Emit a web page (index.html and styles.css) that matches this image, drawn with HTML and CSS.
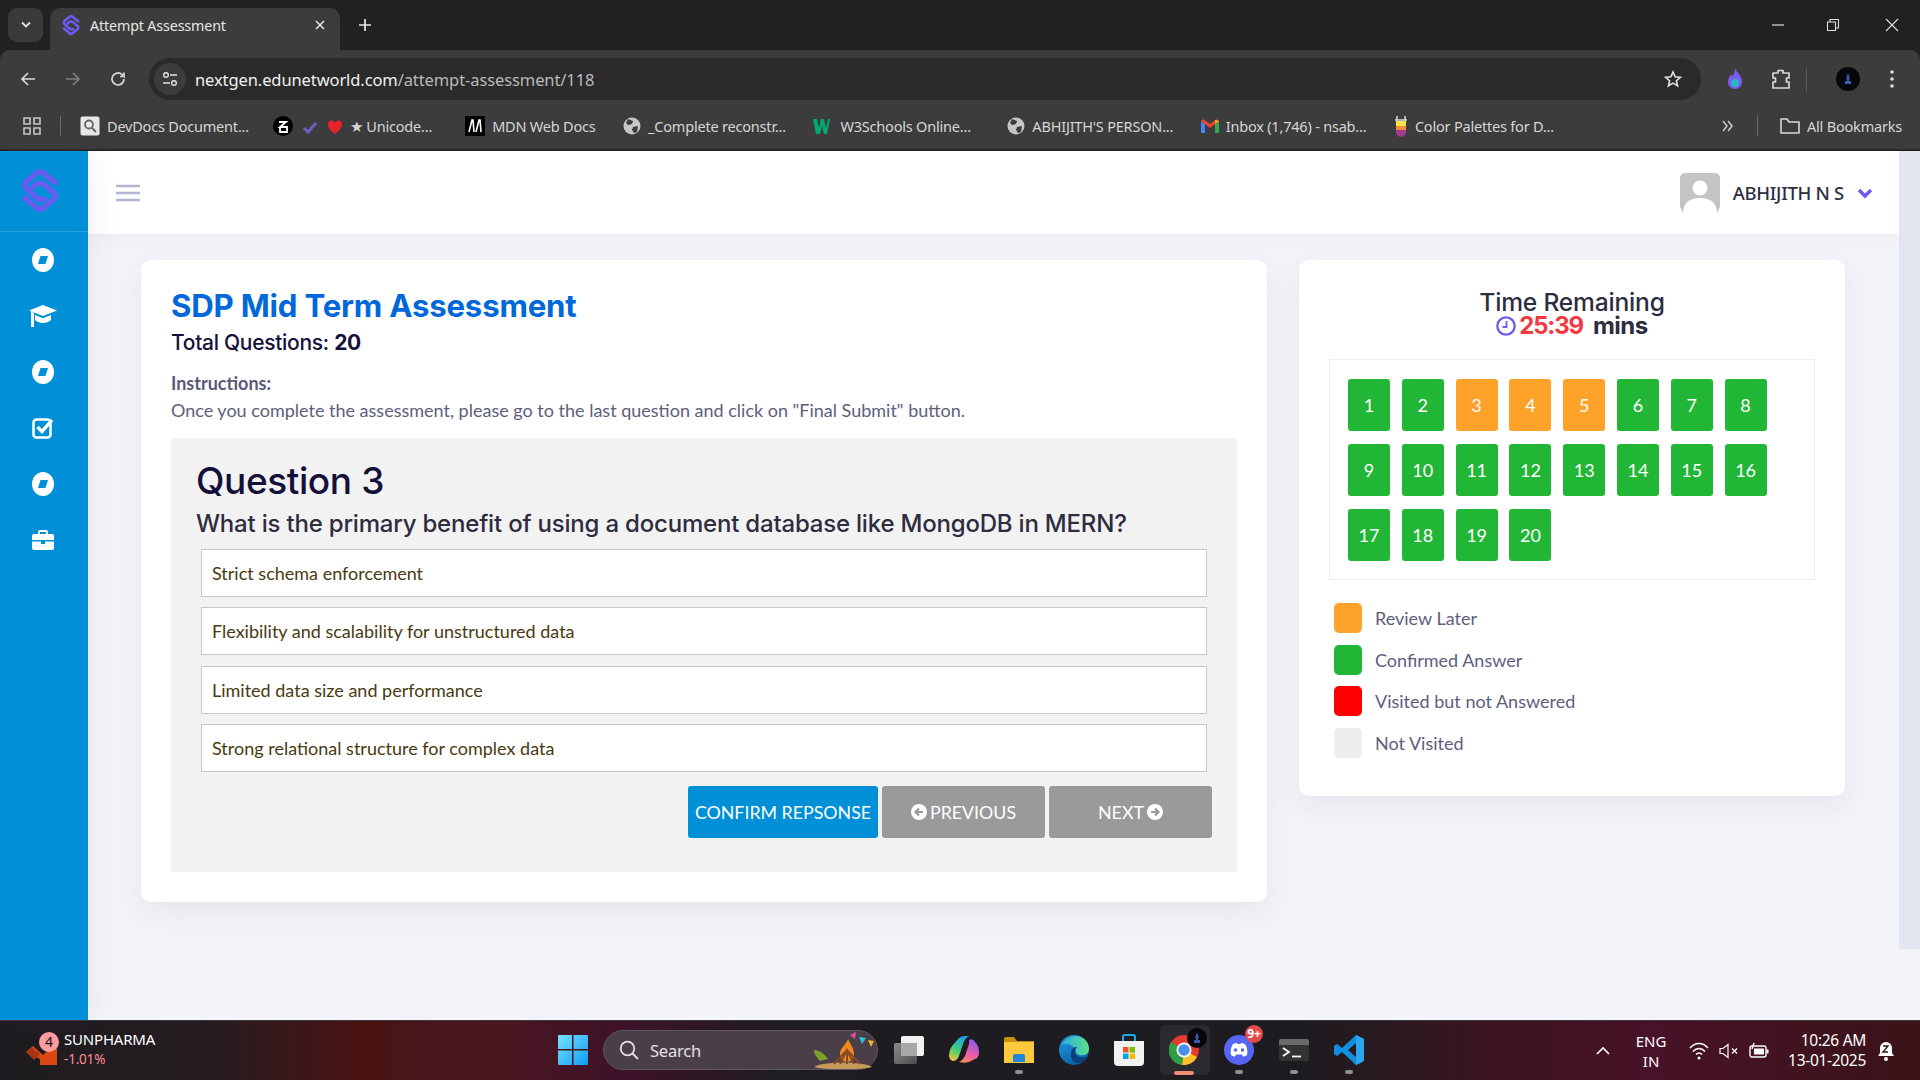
FILE: index.html
```html
<!DOCTYPE html>
<html lang="en">
<head>
<meta charset="utf-8">
<title>Attempt Assessment</title>
<link rel="stylesheet" href="styles.css">
</head>
<body>
<header class="chrome">
  <div class="tabstrip">
    <div class="tabmenu"><svg width="12" height="8" viewBox="0 0 12 8"><path d="M2 1.500l4 4 4-4" fill="none" stroke="#e3e3e3" stroke-width="1.800"/></svg></div>
    <div class="tab">
      <svg class="fav" width="18" height="22" viewBox="0 0 38 45"><path d="M34 14.500L21.500 4.500Q19 3 16.500 4.500L5 14Q2.500 17 5 20L15.500 30Q19 33 23 31M12 19Q19 12.500 24 17L33 25Q35.500 28 33 31L21.500 40.500Q19 42 16.500 40.500L4 30" fill="none" stroke="#6a5cf0" stroke-width="5.500" stroke-linecap="round"/></svg>
      <span class="tabtitle">Attempt Assessment</span>
      <svg width="12" height="12" viewBox="0 0 12 12"><path d="M2 2l8 8M10 2l-8 8" stroke="#e8e8e8" stroke-width="1.500"/></svg>
    </div>
    <svg class="newtab" width="14" height="14" viewBox="0 0 14 14"><path d="M7 1v12M1 7h12" stroke="#e8e8e8" stroke-width="1.700"/></svg>
    <div class="winbtns">
      <svg width="14" height="14" viewBox="0 0 14 14"><path d="M1 7h12" stroke="#ddd" stroke-width="1.200"/></svg>
      <svg width="14" height="14" viewBox="0 0 14 14"><path d="M1.500 4h8v8.500h-8zM4 4V1.500h8.500V10H9.500" fill="none" stroke="#ddd" stroke-width="1.100"/></svg>
      <svg class="winclose" width="14" height="14" viewBox="0 0 14 14"><path d="M1 1l12 12M13 1L1 13" stroke="#ddd" stroke-width="1.100"/></svg>
    </div>
  </div>
  <div class="toolbar">
    <svg class="navicon" width="18" height="18" viewBox="0 0 18 18"><path d="M16 9H3M9 3L3 9l6 6" fill="none" stroke="#d8d8d8" stroke-width="1.700"/></svg>
    <svg class="navicon" width="18" height="18" viewBox="0 0 18 18"><path d="M2 9h13M9 3l6 6-6 6" fill="none" stroke="#7f7f7f" stroke-width="1.700"/></svg>
    <svg class="navicon" width="18" height="18" viewBox="0 0 18 18"><path d="M15 9a6 6 0 1 1-2-4.500L15 6.500V2.500M15 6.500h-4" fill="none" stroke="#d8d8d8" stroke-width="1.700"/></svg>
    <div class="omnibox">
      <span class="sitebtn"><svg width="16" height="16" viewBox="0 0 16 16"><circle cx="4" cy="4" r="2.300" fill="none" stroke="#e2e2e2" stroke-width="1.400"/><path d="M8 4h7M1 12h7" stroke="#e2e2e2" stroke-width="1.400"/><circle cx="12" cy="12" r="2.300" fill="none" stroke="#e2e2e2" stroke-width="1.400"/></svg></span>
      <span class="url"><span class="urlhost">nextgen.edunetworld.com</span>/attempt-assessment/118</span>
      <svg class="star" width="18" height="18" viewBox="0 0 18 18"><path d="M9 2l2.100 4.800 5.200.5-3.900 3.400 1.200 5.100L9 13.100l-4.600 2.700 1.200-5.100L1.700 7.300l5.200-.5z" fill="none" stroke="#e2e2e2" stroke-width="1.600"/></svg>
    </div>
    <svg class="flame" width="18" height="22" viewBox="0 0 18 22"><path d="M9 0c1 4 7 7 7 14a7 7 0 0 1-14 0c0-4 2-5 3-8 1 1 1 2 2 2 1-2 2-5 2-8z" fill="#7a5cf0"/><circle cx="9" cy="15" r="4" fill="#2bb5c9"/></svg>
    <svg class="ext" width="20" height="22" viewBox="0 0 20 22"><path d="M2 5h5V2.500h5V5h6v5h-2.500v4H18v6H2v-6h2.500v-4H2z" fill="none" stroke="#d8d8d8" stroke-width="1.700" stroke-linejoin="round"/></svg>
    <span class="toolsep"></span>
    <svg class="profile" width="24" height="24" viewBox="0 0 24 24"><circle cx="12" cy="12" r="12" fill="#05070d"/><path d="M12 6l2 6h-1v2h2v3H9v-3h2v-2h-1z" fill="#3a5bb0"/></svg>
    <svg class="kebab" width="6" height="20" viewBox="0 0 6 20"><circle cx="3" cy="3" r="1.800" fill="#ddd"/><circle cx="3" cy="10" r="1.800" fill="#ddd"/><circle cx="3" cy="17" r="1.800" fill="#ddd"/></svg>
  </div>
  <div class="bookmarks">
    <svg class="apps" width="18" height="18" viewBox="0 0 18 18"><path d="M1 1h6v6H1zM11 1h6v6h-6zM1 11h6v6H1zM11 11h6v6h-6z" fill="none" stroke="#c9c9c9" stroke-width="1.600"/></svg>
    <span class="bmsep"></span>
    <div class="bm bm-first"><svg width="20" height="20" viewBox="0 0 20 20"><rect x="0.500" y="0.500" width="19" height="19" rx="2" fill="#e8e8e8"/><circle cx="9" cy="8.500" r="4" fill="none" stroke="#666" stroke-width="1.800"/><path d="M12 12l4 4" stroke="#666" stroke-width="2"/></svg><span>DevDocs Document...</span></div>
    <div class="bm bm-multi"><svg class="multi" width="70" height="22" viewBox="0 0 70 22"><circle cx="10" cy="11" r="10" fill="#000"/><path d="M6 7h7l-6 5h7v5H7v-4" fill="none" stroke="#fff" stroke-width="1.800"/><path d="M31 13l4 4 8-9" fill="none" stroke="#6a5fc1" stroke-width="3"/><path d="M62 19c-4-3-7-6-7-10 0-4 5-5 7-1 2-4 7-3 7 1 0 4-3 7-7 10z" fill="#e8232a"/></svg><span>★ Unicode...</span></div>
    <div class="bm"><svg width="20" height="20" viewBox="0 0 20 20"><rect width="20" height="20" fill="#000"/><path d="M4 16L7 4h1l1 12M11 16l3-12h1l1 12" fill="none" stroke="#fff" stroke-width="1.600"/></svg><span>MDN Web Docs</span></div>
    <div class="bm"><svg width="18" height="18" viewBox="0 0 18 18"><circle cx="9" cy="9" r="8.500" fill="#c4c7c5"/><path d="M5 2l5 2-1 3-4 1-2-2zM10 10l5-1-1 6-3 1-2-3z" fill="#3c3c3c"/></svg><span>_Complete reconstr...</span></div>
    <div class="bm"><svg width="20" height="18" viewBox="0 0 20 18"><path d="M0 2h4l2 9 2-9h3l2 9 2-9h2l-3 15h-3l-2-8-2 8H3z" fill="#04aa6d"/></svg><span>W3Schools Online...</span></div>
    <div class="bm bm-gap"><svg width="18" height="18" viewBox="0 0 18 18"><circle cx="9" cy="9" r="8.500" fill="#c4c7c5"/><path d="M5 2l5 2-1 3-4 1-2-2zM10 10l5-1-1 6-3 1-2-3z" fill="#3c3c3c"/></svg><span>ABHIJITH'S PERSON...</span></div>
    <div class="bm"><svg width="18" height="14" viewBox="0 0 18 14"><path d="M0 2v12h4V5z" fill="#4285f4"/><path d="M14 5v9h4V2z" fill="#34a853"/><path d="M0 2l9 7 9-7-2-2-7 5-7-5z" fill="#ea4335"/><path d="M14 1l4 1-4 3z" fill="#fbbc04"/></svg><span>Inbox (1,746) - nsab...</span></div>
    <div class="bm"><svg width="14" height="22" viewBox="0 0 14 22"><path d="M3 1v4M11 1v4M1 5h12" stroke="#ddd" stroke-width="1.500"/><rect x="2" y="6" width="10" height="5" fill="#f6e24a"/><rect x="2" y="11" width="10" height="4" fill="#f28b3c"/><path d="M2 15h10v2a5 5 0 0 1-10 0z" fill="#a03b8e"/></svg><span>Color Palettes for D...</span></div>
    <div class="bmright">
      <svg width="12" height="12" viewBox="0 0 12 12"><path d="M2 1l4 5-4 5M7 1l4 5-4 5" fill="none" stroke="#d0d0d0" stroke-width="1.400"/></svg>
      <span class="bmsep"></span>
      <div class="bm"><svg width="20" height="18" viewBox="0 0 20 18"><path d="M1 2h6l2 3h10v11H1z" fill="none" stroke="#d8d8d8" stroke-width="1.600" stroke-linejoin="round"/></svg><span>All Bookmarks</span></div>
    </div>
  </div>
</header>

<div class="app">
  <aside class="sidebar">
    <div class="brand"><svg width="38" height="45" viewBox="0 0 38 45"><path d="M34 14.500L21.500 4.500Q19 3 16.500 4.500L5 14Q2.500 17 5 20L15.500 30Q19 33 23 31M12 19Q19 12.500 24 17L33 25Q35.500 28 33 31L21.500 40.500Q19 42 16.500 40.500L4 30" fill="none" stroke="#6a5cf0" stroke-width="5.500" stroke-linecap="round"/></svg></div>
    <nav class="sidenav">
      <svg width="22" height="24" viewBox="0 0 22 24"><ellipse cx="11" cy="12" rx="11" ry="12" fill="#fff"/><path d="M8.500 8h7.500l-2.500 8H6z" fill="#0090d7"/></svg>
      <svg width="28" height="24" viewBox="0 0 28 24"><path d="M14 1L28 6.500 14 12 0 6.500z" fill="#fff"/><path d="M6 11l8 3.200 8-3.200v5c-2 2-5 3-8 3s-6-1-8-3z" fill="#fff"/><path d="M2 7v16h3V9z" fill="#fff"/></svg>
      <svg width="22" height="24" viewBox="0 0 22 24"><ellipse cx="11" cy="12" rx="11" ry="12" fill="#fff"/><path d="M8.500 8h7.500l-2.500 8H6z" fill="#0090d7"/></svg>
      <svg width="22" height="22" viewBox="0 0 22 22"><rect x="1.500" y="2.500" width="17" height="18" rx="3" fill="none" stroke="#fff" stroke-width="2.600"/><path d="M5.500 10l4.500 4.500L20 3" fill="none" stroke="#fff" stroke-width="3.400"/></svg>
      <svg width="22" height="24" viewBox="0 0 22 24"><ellipse cx="11" cy="12" rx="11" ry="12" fill="#fff"/><path d="M8.500 8h7.500l-2.500 8H6z" fill="#0090d7"/></svg>
      <svg width="22" height="20" viewBox="0 0 22 20"><path d="M7 4V2a1 1 0 0 1 1-1h6a1 1 0 0 1 1 1v2" fill="none" stroke="#fff" stroke-width="2"/><path d="M2 4h18a2 2 0 0 1 2 2v4H0V6a2 2 0 0 1 2-2zM0 11.500h9V14h4v-2.500h9V18a2 2 0 0 1-2 2H2a2 2 0 0 1-2-2z" fill="#fff"/></svg>
    </nav>
  </aside>

  <main class="main">
    <div class="topbar">
      <svg class="burger" width="24" height="18" viewBox="0 0 24 18"><path d="M0 2h24M0 9h24M0 16h24" stroke="#b3b5d6" stroke-width="2.400"/></svg>
      <div class="user">
        <svg class="avatar" width="40" height="40" viewBox="0 0 40 40"><path d="M5 0h30a5 5 0 0 1 5 5v29l-3 6H3l-3-6V5a5 5 0 0 1 5-5z" fill="#c4c4c4"/><circle cx="20" cy="15" r="7.500" fill="#fff"/><path d="M3 40c0-10 7-15 17-15s17 5 17 15z" fill="#fff"/></svg>
        <span class="username">ABHIJITH N S</span>
        <svg width="16" height="12" viewBox="0 0 16 12"><path d="M2 3l6 6 6-6" fill="none" stroke="#6a5cf0" stroke-width="3.400"/></svg>
      </div>
    </div>
    <div class="content">
      <section class="card assess">
        <h1 class="title">SDP Mid Term Assessment</h1>
        <p class="total">Total Questions: <b>20</b></p>
        <p class="instr-head">Instructions:</p>
        <p class="instr">Once you complete the assessment, please go to the last question and click on "Final Submit" button.</p>
        <div class="qpanel">
          <h2 class="qnum">Question 3</h2>
          <h3 class="qtext">What is the primary benefit of using a document database like MongoDB in MERN?</h3>
          <div class="options">
            <div class="opt">Strict schema enforcement</div>
            <div class="opt">Flexibility and scalability for unstructured data</div>
            <div class="opt">Limited data size and performance</div>
            <div class="opt">Strong relational structure for complex data</div>
          </div>
          <div class="actions">
            <button class="btn btn-blue">CONFIRM REPSONSE</button>
            <button class="btn btn-grey"><svg width="16" height="16" viewBox="0 0 16 16"><circle cx="8" cy="8" r="8" fill="#fff"/><path d="M12 8H5M8 4.500L4.500 8 8 11.500" fill="none" stroke="#9a9a9a" stroke-width="2.200"/></svg>PREVIOUS</button>
            <button class="btn btn-grey">NEXT<svg width="16" height="16" viewBox="0 0 16 16"><circle cx="8" cy="8" r="8" fill="#fff"/><path d="M4 8h7M8 4.500L11.500 8 8 11.500" fill="none" stroke="#9a9a9a" stroke-width="2.200"/></svg></button>
          </div>
        </div>
      </section>
      <section class="card status">
        <h2 class="timer-head">Time Remaining</h2>
        <p class="timer"><svg width="20" height="20" viewBox="0 0 20 20"><circle cx="10" cy="10" r="8.700" fill="none" stroke="#6a5cf0" stroke-width="2.300"/><path d="M10.500 5v6H6.500" fill="none" stroke="#6a5cf0" stroke-width="1.800"/></svg><span class="clock">25:39</span> <span class="mins">mins</span></p>
        <div class="qgrid">
          <span class="q ok">1</span><span class="q ok">2</span><span class="q later">3</span><span class="q later">4</span><span class="q later">5</span><span class="q ok">6</span><span class="q ok">7</span><span class="q ok">8</span>
          <span class="q ok">9</span><span class="q ok">10</span><span class="q ok">11</span><span class="q ok">12</span><span class="q ok">13</span><span class="q ok">14</span><span class="q ok">15</span><span class="q ok">16</span>
          <span class="q ok">17</span><span class="q ok">18</span><span class="q ok">19</span><span class="q ok">20</span>
        </div>
        <ul class="legend">
          <li><i class="sw later"></i>Review Later</li>
          <li><i class="sw ok"></i>Confirmed Answer</li>
          <li><i class="sw red"></i>Visited but not Answered</li>
          <li><i class="sw none"></i>Not Visited</li>
        </ul>
      </section>
    </div>
    <div class="scrolltrack"></div>
  </main>
</div>

<footer class="taskbar">
  <div class="ticker">
    <svg class="tickicon" width="34" height="28" viewBox="0 0 34 28"><path d="M0 12l7-6 10 9 8-8 6 0v18H14v-6z" fill="#d9480f"/><path d="M0 12l8 8 6-6-8-6z" fill="#a8321a"/></svg>
    <span class="tickbadge">4</span>
    <div class="ticktext"><span>SUNPHARMA</span><span class="tickpct">-1.01%</span></div>
  </div>
  <svg class="winlogo" width="30" height="30" viewBox="0 0 30 30"><defs><linearGradient id="w" x1="0" y1="0" x2="1" y2="1"><stop offset="0" stop-color="#76e3fb"/><stop offset="1" stop-color="#0f9bf5"/></linearGradient></defs><path d="M0 1a1 1 0 0 1 1-1h13v14H0zM15.500 0H29a1 1 0 0 1 1 1v13H15.500zM0 15.500h14V30H1a1 1 0 0 1-1-1zM15.500 15.500H30V29a1 1 0 0 1-1 1H15.500z" fill="url(#w)"/></svg>
  <div class="search">
    <svg width="20" height="20" viewBox="0 0 20 20"><circle cx="8.500" cy="8.500" r="6.800" fill="none" stroke="#e4e0e4" stroke-width="1.800"/><path d="M13.500 13.500L19 19" stroke="#e4e0e4" stroke-width="2"/></svg>
    <span class="searchtext">Search</span>
    <svg class="fire" width="62" height="38" viewBox="0 0 62 38"><path d="M2 36c8-6 50-6 58 0-8 3-50 3-58 0z" fill="#c59a5c"/><path d="M8 30c-4-4-6-8-6-11 4 0 10 3 14 9z" fill="#7ca22c"/><path d="M36 8c2 5 6 9 6 15 0 5-4 8-7 8s-7-3-7-8c0-6 6-9 8-15z" fill="#f28a1c"/><path d="M22 33l13-14 13 14M35 19v14M28 33l7-14 7 14" fill="none" stroke="#8a4b24" stroke-width="2"/><path d="M38 4l6-3-1 7z" fill="#e64bb0"/><path d="M47 6l7 1-4 6z" fill="#2fc4d9"/><path d="M56 9l6 1-3 6z" fill="#f3b72e"/></svg>
  </div>
  <div class="tbicons">
    <span class="tbi"><svg width="30" height="28" viewBox="0 0 30 28"><defs><linearGradient id="tv" x1="0" y1="0" x2="1" y2="1"><stop offset="0" stop-color="#8a8a8a"/><stop offset="1" stop-color="#4e4e4e"/></linearGradient></defs><rect x="0" y="7" width="23" height="21" rx="2" fill="url(#tv)"/><rect x="7" y="0" width="23" height="20" rx="2" fill="#f2f2f2"/><rect x="7" y="7" width="16" height="13" fill="#a8a8a8"/></svg></span>
    <span class="tbi"><svg width="30" height="28" viewBox="0 0 30 28"><defs><linearGradient id="c1" x1="0.700" y1="0" x2="0.200" y2="1"><stop offset="0" stop-color="#1e9af0"/><stop offset=".55" stop-color="#3ccf7a"/><stop offset="1" stop-color="#f2c53a"/></linearGradient><linearGradient id="c2" x1="0.700" y1="0" x2="0.300" y2="1"><stop offset="0" stop-color="#8a5cf0"/><stop offset=".6" stop-color="#ee5ca8"/><stop offset="1" stop-color="#f88a5a"/></linearGradient></defs><path d="M10 2Q12 0 16 0H20Q16 2 14 8L10 20Q8 25 4 25Q0 24 0 19Q0 14 3 10z" fill="url(#c1)"/><path d="M20 4Q24 2 26 6Q30 10 30 16Q30 22 26 23L22 25Q18 28 10 26Q14 24 16 20L20 8z" fill="url(#c2)"/></svg></span>
    <span class="tbi"><svg width="30" height="26" viewBox="0 0 30 26"><path d="M0 2a2 2 0 0 1 2-2h8l3 4h17v22H0z" fill="#c9900f"/><path d="M0 5h30v21H0z" fill="#fcc93d"/><path d="M9 25v-6a2 2 0 0 1 2-2h8a2 2 0 0 1 2 2v6z" fill="#1f86d8"/></svg><i class="dot"></i></span>
    <span class="tbi"><svg width="30" height="30" viewBox="0 0 30 30"><defs><linearGradient id="e1" x1="0" y1="0" x2="0.600" y2="1"><stop offset="0" stop-color="#1f9be0"/><stop offset="1" stop-color="#0b5ea8"/></linearGradient><linearGradient id="e2" x1="0" y1="0.500" x2="1" y2="0.500"><stop offset="0" stop-color="#2aaee8"/><stop offset="1" stop-color="#5be08a"/></linearGradient></defs><circle cx="15" cy="15" r="15" fill="url(#e1)"/><path d="M2 11C6 1 22-3 28 7C31 12 31 19 25 20C20 21 16 19 17 15C12 8 6 7 2 11z" fill="url(#e2)"/><path d="M12 19c0-5 4-8 6-7-3 2-3 8 2 10 3 1 6 1 9-1-3 7-11 9-15 5-2-2-2-5-2-7z" fill="#0a3f7a"/></svg></span>
    <span class="tbi"><svg width="30" height="32" viewBox="0 0 30 32"><path d="M9 8V3a2 2 0 0 1 2-2h8a2 2 0 0 1 2 2v5" fill="none" stroke="#19a9e8" stroke-width="2"/><path d="M0 7h30v21a4 4 0 0 1-4 4H4a4 4 0 0 1-4-4z" fill="#f2f2f2"/><rect x="9" y="13" width="5.500" height="5.500" fill="#f25022"/><rect x="15.500" y="13" width="5.500" height="5.500" fill="#7fba00"/><rect x="9" y="19.500" width="5.500" height="5.500" fill="#00a4ef"/><rect x="15.500" y="19.500" width="5.500" height="5.500" fill="#ffb900"/></svg></span>
    <span class="tbi tbi-active"><svg width="30" height="30" viewBox="0 0 30 30"><circle cx="15" cy="15" r="15" fill="#e33b2e"/><path d="M15 15L28 22A15 15 0 0 1 13 30z" fill="#fbc02d"/><path d="M15 15L13 30A15 15 0 0 1 2 7z" fill="#2e9e47"/><circle cx="15" cy="15" r="7.500" fill="#fff"/><circle cx="15" cy="15" r="5.800" fill="#4a90e8"/></svg><i class="bar"></i><svg class="cbadge" width="20" height="20" viewBox="0 0 20 20"><circle cx="10" cy="10" r="10" fill="#05070d"/><path d="M10 4l2 6h-1v2h2v3H7v-3h2v-2H8z" fill="#3a5bb0"/></svg></span>
    <span class="tbi"><svg width="30" height="30" viewBox="0 0 30 30"><circle cx="15" cy="15" r="15" fill="#5865f2"/><path d="M7 20c-1-4 0-8 2-11 2-1 3-1 4-1l.5 1h3L17 8c1 0 2 0 4 1 2 3 3 7 2 11-1.500 1-3 1.500-4 1.500l-1-2h-6l-1 2c-1 0-2.500-.5-4-1.500z" fill="#fff"/><circle cx="11.500" cy="15" r="1.800" fill="#5865f2"/><circle cx="18.500" cy="15" r="1.800" fill="#5865f2"/></svg><b class="dbadge">9+</b><i class="dot"></i></span>
    <span class="tbi"><svg width="30" height="22" viewBox="0 0 30 22"><rect width="30" height="22" rx="2" fill="#333"/><path d="M0 2a2 2 0 0 1 2-2h26a2 2 0 0 1 2 2v4H0z" fill="#6a6a6a"/><path d="M4 9l6 4-6 4" fill="none" stroke="#fff" stroke-width="1.800"/><path d="M13 17.500h9" stroke="#fff" stroke-width="1.800"/></svg><i class="dot"></i></span>
    <span class="tbi"><svg width="30" height="30" viewBox="0 0 30 30"><path d="M22 0l8 4v22l-8 4L8 17l-5 4-3-2v-8l3-2 5 4zM22 8l-8 7 8 7z" fill="#0f8fe0"/><path d="M22 0l8 4v22l-8 4z" fill="#2aa7f0"/></svg><i class="dot"></i></span>
  </div>
  <div class="tray">
    <svg class="caret" width="16" height="10" viewBox="0 0 16 10"><path d="M2 8l6-6 6 6" fill="none" stroke="#fff" stroke-width="1.600"/></svg>
    <div class="lang"><span>ENG</span><span>IN</span></div>
    <div class="sysicons">
      <svg width="20" height="18" viewBox="0 0 20 18"><path d="M1 6c5-6 13-6 18 0M4 9.500c3.500-4 8.500-4 12 0M7 12.500c2-2 4-2 6 0" fill="none" stroke="#fff" stroke-width="1.500"/><circle cx="10" cy="16" r="1.500" fill="#fff"/></svg>
      <svg width="20" height="16" viewBox="0 0 20 16"><path d="M1 5.500h3L9 1.500v13l-5-4H1z" fill="none" stroke="#fff" stroke-width="1.200"/><path d="M13 5.500l5 5M18 5.500l-5 5" stroke="#fff" stroke-width="1.200"/></svg>
      <svg width="20" height="18" viewBox="0 0 20 18"><rect x="1" y="4" width="16" height="11" rx="2" fill="none" stroke="#fff" stroke-width="1.400"/><rect x="5" y="6.500" width="10" height="6" fill="#fff"/><rect x="17.500" y="7.500" width="2" height="4" fill="#fff"/><path d="M5 1l-2 6" stroke="#fff" stroke-width="1.400"/></svg>
    </div>
    <div class="clockbox"><span>10:26 AM</span><span>13-01-2025</span></div>
    <svg class="bell" width="18" height="22" viewBox="0 0 18 22"><path d="M9 2a6 6 0 0 1 6 6v5l2 3H1l2-3V8a6 6 0 0 1 6-6z" fill="#fff"/><circle cx="9" cy="19" r="2" fill="#fff"/><path d="M6 6h5l-5 6h5" fill="none" stroke="#3a1418" stroke-width="1.400"/></svg>
  </div>
</footer>
</body>
</html>
```
FILE: styles.css
```css
* { box-sizing: border-box; }
html, body { margin: 0; height: 100%; }
body {
  width: 1920px; height: 1080px; overflow: hidden;
  display: flex; flex-direction: column;
  font-family: "Lato", "Noto Sans", sans-serif;
  background: #f3f4f9;
}
h1, h2, h3, p, ul { margin: 0; padding: 0; }

/* browser chrome */
.chrome { height: 151px; flex: none; background: #202221; color: #dfdfdf; font-family: "Noto Sans", sans-serif; }
.tabstrip { height: 50px; display: flex; align-items: flex-start; padding-left: 8px; position: relative; }
.tabmenu { width: 35px; height: 34px; margin-top: 8px; background: #3a3a3a; border-radius: 9px; display: flex; align-items: center; justify-content: center; }
.tab { width: 290px; height: 42px; margin: 8px 0 0 7px; background: #3c3c3c; border-radius: 10px 10px 0 0; display: flex; align-items: center; padding: 0 14px 8px 12px; gap: 10px; font-size: 14.300px; color: #e6e6e6; }
.tabtitle { flex: 1; letter-spacing: -0.15px; }
.newtab { margin: 18px 0 0 18px; }
.winbtns { margin-left: auto; margin-top: 18px; display: flex; gap: 41px; padding-right: 21px; }
.winclose { margin-left: 4px; }
.toolbar { height: 55px; background: #3c3c3c; border-radius: 10px 10px 0 0; display: flex; align-items: flex-start; padding: 8px 0 0 19px; position: relative; }
.navicon { margin: 12px 27px 0 0; }
.navicon:nth-child(3) { margin-right: 22px; }
.omnibox { width: 1552px; height: 42px; background: #2a2a2a; border-radius: 21px; display: flex; align-items: center; padding: 0 5px 0 5px; font-size: 16.500px; }
.sitebtn { width: 32px; height: 32px; border-radius: 50%; background: #3c3c3c; display: flex; align-items: center; justify-content: center; margin-right: 9px; }
.url { flex: 1; color: #b9b9b9; letter-spacing: -0.1px; }
.urlhost { color: #f0f0f0; }
.star { margin-right: 14px; }
.flame { margin: 10px 0 0 25px; }
.ext { margin: 10px 0 0 27px; }
.toolsep { width: 1px; height: 24px; background: #5a5a5a; margin: 10px 0 0 15px; }
.profile { margin: 9px 0 0 29px; }
.kebab { margin: 11px 0 0 29px; }
.bookmarks { height: 45px; background: #3c3c3c; display: flex; align-items: center; padding: 0 18px 3px 23px; border-bottom: 1px solid #2a2a2a; font-size: 14.500px; color: #d6d6d6; }
.bmsep { width: 1px; height: 20px; background: #6a6a6a; margin: 0 19px; flex: none; }
.apps { flex: none; }
.bm { display: flex; align-items: center; gap: 7px; margin-right: 27.500px; white-space: nowrap; letter-spacing: -0.2px; }
.bm-first { margin-right: 24px; }
.bm-multi { margin-right: 33px; }
.bm-gap { margin-left: 9px; }
.bmright { margin-left: auto; display: flex; align-items: center; }
.bmright .bm { margin-right: 0; }
.bmright .bmsep { margin: 0 22px 0 24px; }

/* app */
.app { flex: 1; min-height: 0; display: flex; }
.sidebar { width: 88px; flex: none; background: #0090d7; box-shadow: 0 0 28px rgba(82, 63, 105, .1); z-index: 1; }
.brand { height: 81px; border-bottom: 1px solid #2aa2de; padding: 17px 0 0 21px; }
.sidenav { display: grid; grid-auto-rows: 56px; justify-items: center; align-items: center; padding-right: 2px; }
.main { flex: 1; position: relative; min-width: 0; }
.topbar { height: 83px; width: 1811px; background: #fff; display: flex; align-items: center; justify-content: space-between; padding: 0 26px 0 28px; box-shadow: 0 6px 18px rgba(82, 63, 105, .03); position: relative; }
.burger { margin-top: 1px; }
.user { display: flex; align-items: center; }
.avatar { margin: 0 13px 0 0; }
.username { font-family: "Noto Sans", sans-serif; font-size: 18.500px; font-weight: 500; color: #2d2d3f; margin-right: 13px; letter-spacing: -0.3px; }
.content { display: flex; align-items: flex-start; gap: 32px; padding: 26px 0 0 53px; }
.card { background: #fff; border-radius: 10px; box-shadow: 0 10px 30px rgba(82, 63, 105, .08); }
.scrolltrack { position: absolute; top: 0; right: 0; width: 21px; height: 798px; background: #e2e6f0; }

/* assessment */
.assess { width: 1126px; height: 642px; padding: 27px 30px; }
.title { font-family: "Inter", sans-serif; font-size: 31.200px; font-weight: 700; color: #0068d9; line-height: 38px; letter-spacing: -0.2px; }
.total { font-family: "Inter", sans-serif; font-size: 21px; font-weight: 500; color: #15103a; line-height: 30px; margin-top: 3px; letter-spacing: -0.3px; }
.total b { font-weight: 700; }
.instr-head { font-size: 18px; font-weight: 700; color: #5a5a78; line-height: 24px; margin-top: 13px; }
.instr { font-size: 18px; color: #5e5e7c; line-height: 26px; margin-top: 2px; }
.qpanel { background: #f2f2f2; height: 434px; margin-top: 15px; padding: 21px 25px 0 25px; }
.qnum { font-family: "Inter", sans-serif; font-size: 37px; font-weight: 500; color: #15103a; line-height: 44px; letter-spacing: -0.4px; }
.qtext { font-family: "Inter", sans-serif; font-size: 24px; font-weight: 500; color: #2e2c3e; line-height: 34px; margin-top: 4px; letter-spacing: -0.2px; }
.options { display: flex; flex-direction: column; gap: 10.330px; margin: 8px 5px 0 5px; }
.opt { height: 48px; background: #fff; border: 1px solid #c8c8c8; display: flex; align-items: center; padding-left: 10px; font-size: 18px; color: #4a3a10; }
.actions { display: flex; justify-content: flex-end; gap: 4px; margin: 14px 0 0 0; }
.btn { height: 52px; border: 0; border-radius: 3px; color: #fff; font-family: "Lato", sans-serif; font-size: 17.800px; display: flex; align-items: center; justify-content: center; gap: 3px; padding: 0; }
.btn-blue { width: 190px; background: #0090d7; }
.btn-grey { width: 163px; background: #9a9a9a; }

/* status */
.status { width: 546px; height: 536px; padding: 30px 30px 0 30px; }
.timer-head { font-family: "Inter", sans-serif; font-size: 24.600px; font-weight: 500; color: #2d2d3f; text-align: center; line-height: 24px; letter-spacing: -0.2px; }
.timer { font-family: "Inter", sans-serif; font-size: 24px; font-weight: 700; color: #2d2d3f; text-align: center; line-height: 24px; display: flex; justify-content: center; align-items: center; gap: 3px; margin-bottom: 21px; letter-spacing: -0.5px; }
.clock { color: #f2393f; letter-spacing: -1.200px; }
.mins { margin-left: 7px; }
.qgrid { border: 1px solid #eee; width: 486px; height: 221px; padding: 19px 0 0 18px; display: flex; flex-wrap: wrap; gap: 13px 11.800px; align-content: flex-start; }
.q { width: 42px; height: 52px; border-radius: 3px; color: #fff; display: flex; align-items: center; justify-content: center; font-size: 18px; }
.ok { background: #21b636; }
.later { background: #ffa229; }
.red { background: #ff0000; }
.none { background: #eeeeee; }
.legend { list-style: none; margin: 23px 0 0 5px; display: flex; flex-direction: column; gap: 11.500px; }
.legend li { display: flex; align-items: center; gap: 13px; height: 30px; font-size: 18px; color: #5e5e7c; }
.sw { width: 28px; height: 30px; border-radius: 5px; }

/* taskbar */
.taskbar { height: 60px; flex: none; display: flex; align-items: center; position: relative; border-top: 1px solid #3a3a3c; color: #fff; font-family: "Noto Sans", sans-serif;
  background: linear-gradient(90deg, #1e1c20 0, #241c20 200px, #4a1414 360px, #4a1620 500px, #3e1228 620px, #1f1c22 780px, #1c1c20 1300px, #3d1420 1500px, #481228 1650px, #3a1418 1920px); }
.ticker { width: 558px; flex: none; display: flex; align-items: center; padding-left: 26px; position: relative; }
.tickicon { margin-top: 7px; }
.tickbadge { position: absolute; left: 39px; top: -1px; width: 20px; height: 20px; border-radius: 50%; background: #ff9ca0; color: #111; font-size: 14px; line-height: 20px; text-align: center; }
.ticktext { display: flex; flex-direction: column; font-size: 15px; line-height: 20px; margin: -4px 0 0 4px; letter-spacing: -0.2px; }
.tickpct { color: #ff8f95; font-size: 13.500px; }
.winlogo { flex: none; margin-top: -2px; }
.search { width: 275px; height: 40px; margin: -1px 0 0 15px; border-radius: 20px; background: #4a3f49; border: 1px solid #5e5560; display: flex; align-items: center; padding-left: 15px; color: #e4e0e4; font-size: 16.500px; position: relative; flex: none; }
.searchtext { margin-left: 11px; letter-spacing: -0.2px; }
.fire { position: absolute; right: 3px; bottom: 0; }
.tbicons { display: flex; margin: -1px 0 0 3px; }
.tbi { width: 55px; height: 50px; display: flex; align-items: center; justify-content: center; position: relative; }
.tbi-active { background: #2a2a2e; border-radius: 6px; width: 47px; margin: 0 4px; box-shadow: 3px 0 0 #2e2a30; }
.dot { position: absolute; bottom: 1px; left: 23.500px; width: 8px; height: 4px; background: #8f8f8f; border-radius: 2px; }
.bar { position: absolute; bottom: 0; left: 13.500px; width: 20px; height: 4px; background: #f08a78; border-radius: 2px; }
.cbadge { position: absolute; top: 3px; right: 0; }
.dbadge { position: absolute; top: 0; right: 3px; width: 18px; height: 18px; background: #e5484d; border-radius: 50%; font-size: 12px; line-height: 18px; text-align: center; font-weight: 700; }
.tray { margin-left: auto; display: flex; align-items: center; padding-right: 25px; }
.caret { margin-right: 24px; }
.lang { display: flex; flex-direction: column; align-items: center; font-size: 15px; line-height: 20px; width: 32px; margin-right: 22px; }
.sysicons { display: flex; gap: 10px; align-items: center; margin-right: 19px; }
.clockbox { display: flex; flex-direction: column; align-items: flex-end; font-size: 15.500px; line-height: 20px; letter-spacing: -0.3px; margin: -1px 11px 0 0; }
```
